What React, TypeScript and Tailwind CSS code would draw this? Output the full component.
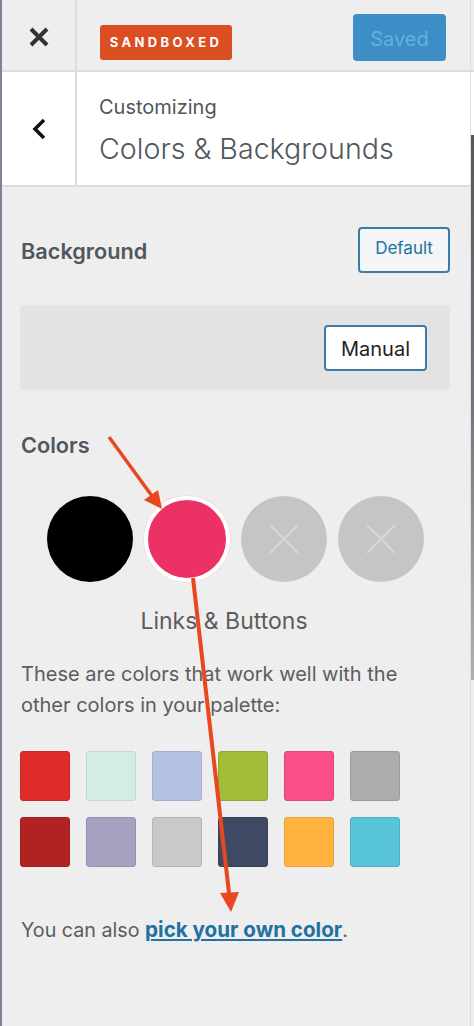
const FONT = "font-['Inter','Liberation_Sans',sans-serif]"

const row1 = [
  'bg-[#dd2c2a] border-[#c92523]',
  'bg-[#d2ece6] border-[#bddbd4]',
  'bg-[#b4c1e3] border-[#a3b0d2]',
  'bg-[#a2bd38] border-[#90aa32]',
  'bg-[#f94e8a] border-[#e0457b]',
  'bg-[#adadad] border-[#9c9c9c]',
]
const row2 = [
  'bg-[#b12222] border-[#9f1e1e]',
  'bg-[#a4a2c0] border-[#9492ad]',
  'bg-[#c9c9c9] border-[#b5b5b5]',
  'bg-[#3e4a63] border-[#384359]',
  'bg-[#ffb33e] border-[#e6a138]',
  'bg-[#58c4d9] border-[#4fb0c3]',
]

function Swatch({ color }: { color: string }) {
  return <div className={`w-[50px] h-[50px] rounded-[3px] border ${color}`} />
}

function EmptyCircle() {
  return (
    <div className="w-[86px] h-[86px] rounded-full bg-[#c5c5c5] flex items-center justify-center">
      <svg width="32" height="32" viewBox="0 0 32 32" stroke="#d8d8d8" strokeWidth="2" fill="none">
        <path d="M2 2 L30 30 M30 2 L2 30" />
      </svg>
    </div>
  )
}

export default function App() {
  return (
    <div className={`${FONT} relative w-[474px] h-[1026px] overflow-hidden bg-[#eeeeee] border-l-2 border-l-[#7a8494]`}>
      {/* Top bar */}
      <div className="flex h-[72px] border-b-2 border-[#dddddd]">
        <div className="w-[75px] flex items-center justify-center border-r-2 border-[#dddddd] pt-[4px]">
          <svg width="20" height="20" viewBox="0 0 20 20" stroke="#333" strokeWidth="4" fill="none">
            <path d="M2 2 L18 18 M18 2 L2 18" />
          </svg>
        </div>
        <div className="flex-1 flex justify-between pl-[23px] pr-[28px]">
          <div className="mt-[25px] w-[132px] h-[35px] rounded-[3px] bg-[#da4e22] flex items-center justify-center text-white text-[13px] font-bold tracking-[0.26em]">
            SANDBOXED
          </div>
          <div className="mt-[14px] w-[93px] h-[47px] rounded-[4px] bg-[#3d8dc6] flex items-center justify-center pt-[2px] text-[#5fb3e0] text-[20px]">
            Saved
          </div>
        </div>
      </div>

      {/* Section title */}
      <div className="flex h-[115px] bg-white border-b-2 border-[#dddddd]">
        <div className="w-[75px] flex items-center justify-center border-r-2 border-[#dddddd]">
          <svg width="14" height="22" viewBox="0 0 14 22" stroke="#111" strokeWidth="3.5" fill="none">
            <path d="M12 2 L3 11 L12 20" />
          </svg>
        </div>
        <div className="pl-[22px] pt-[23px] text-[#50575e]">
          <div className="text-[20px] leading-[24px]">Customizing</div>
          <div className="text-[28.6px] leading-[36px] mt-[12px] font-light">Colors &amp; Backgrounds</div>
        </div>
      </div>

      <div className="pl-[18px] pr-[22px]">
        {/* Background */}
        <div className="flex items-start justify-between pt-[40px] pr-[2px]">
          <div className="ml-[1px] mt-[10px] text-[21.7px] leading-[28px] font-semibold text-[#50575e]">Background</div>
          <div className="w-[92px] h-[46px] rounded-[4px] border-2 border-[#3a7ca8] bg-[#f3f5f6] flex items-center justify-center pb-[3px] text-[#2271a1] text-[17px]">
            Default
          </div>
        </div>
        <div className="mt-[32px] mr-[2px] h-[85px] rounded-[3px] bg-[#e3e3e3] border border-[#e6e6e6] flex items-center justify-end pr-[22px]">
          <div className="w-[103px] h-[46px] rounded-[4px] border-2 border-[#3a7ca8] bg-white flex items-center justify-center pt-[2px] text-[#222] text-[20px]">
            Manual
          </div>
        </div>

        {/* Colors */}
        <div className="ml-[1px] mt-[41px] text-[21.7px] leading-[28px] font-semibold text-[#50575e]">Colors</div>
        <div className="mt-[37px] pl-[27px] flex gap-[11px] items-center">
          <div className="w-[86px] h-[86px] rounded-full bg-black" />
          <div className="w-[86px] h-[86px] rounded-full bg-[#ec3166] border-[4px] border-white ring-1 ring-[#f8dbe3]" />
          <EmptyCircle />
          <EmptyCircle />
        </div>
        <div className="mt-[25px] w-[408px] text-center text-[#5c5c5c] text-[23px] leading-[28px]">Links &amp; Buttons</div>
        <p className="ml-[1px] mt-[24px] text-[#5a5d60] text-[20px] leading-[31px] w-[430px]">
          These are colors that work well with the other colors in your palette:
        </p>

        {/* Suggested palette */}
        <div className="mt-[30px] flex flex-col gap-[16px]">
          <div className="flex gap-[16px]">
            {row1.map(c => <Swatch key={c} color={c} />)}
          </div>
          <div className="flex gap-[16px]">
            {row2.map(c => <Swatch key={c} color={c} />)}
          </div>
        </div>

        <p className="ml-[1px] mt-[49px] text-[19.7px] leading-[28px] text-[#5c5c5c] whitespace-nowrap">
          You can also{' '}
          <a className="font-bold text-[20.6px] text-[#2271a1] underline">pick your own color</a>.
        </p>
      </div>

      {/* Panel edge and the page showing behind it */}
      <div className="absolute top-0 bottom-0 right-[3px] w-[1px] bg-[#dddddd]" />
      <div className="absolute top-[135px] h-[545px] right-0 w-[3px] bg-gradient-to-b from-[#56595c] via-[#74787c] to-[#b0b0b0]" />

      {/* Annotation arrows */}
      <svg className="absolute left-[-2px] top-0" width="474" height="1026" fill="none">
        <path d="M109 437 L152 496" stroke="#e8471f" strokeWidth="3.5" />
        <path d="M144 500 L158 490 L162 509 Z" fill="#e8471f" />
        <path d="M193 578 L229 893" stroke="#e8471f" strokeWidth="4" />
        <path d="M220 893 L239 892 L231 912 Z" fill="#e8471f" />
      </svg>
    </div>
  )
}
